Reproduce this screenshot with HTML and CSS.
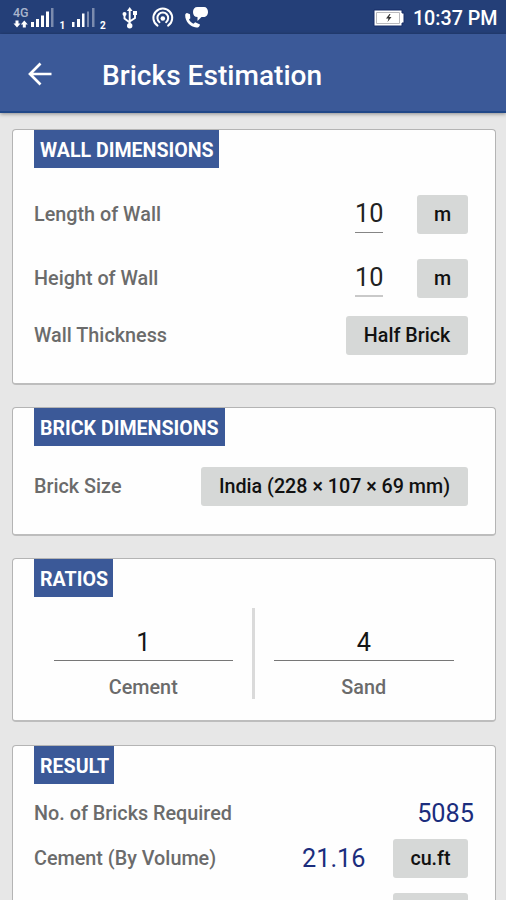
FILE: index.html
```html
<!DOCTYPE html>
<html lang="en">
<head>
<meta charset="utf-8">
<title>Bricks Estimation</title>
<link rel="stylesheet" href="styles.css">
</head>
<body>
<div class="screen">
  <header class="status">
    <svg class="status-icons" width="220" height="34" viewBox="0 0 220 34" aria-hidden="true">
      <text class="net" x="13" y="17">4G</text>
      <g fill="#fff">
        <path d="M15.500 20.500h3v3h2L17 27.500l-3.500-4h2zM22.800 27.500h3v-3h2l-3.500-4-3.500 4h2z"/>
        <path d="M31 22h3v5h-3zM36 19h3v8h-3zM41 15.500h3v11.500h-3zM46 11.500h3v15.500h-3z"/>
        <path d="M51 8h2.500v19H51z" opacity=".4"/>
        <path d="M72 22h2.500v5H72zM77 19h3v8h-3zM82 13.500h2.500v13.500H82z"/>
        <path d="M87 11.500h2v15.500h-2zM92 8h2.500v19H92z" opacity=".4"/>
      </g>
      <text class="sim" x="59.500" y="29">1</text>
      <text class="sim" x="100" y="29">2</text>
      <g fill="none" stroke="#fff" stroke-width="1.900">
        <path d="M129.700 10v15M124.500 14v4.500l5.200 4M135 12.500v5.500l-5.300 3.500"/>
      </g>
      <g fill="#fff"><path d="M129.700 7l2.800 4h-5.600z"/><circle cx="129.700" cy="25.800" r="2.700"/><circle cx="124.500" cy="14" r="2"/><path d="M133 11h4v4h-4z"/></g>
      <g fill="none" stroke="#fff" stroke-width="2" stroke-linecap="round">
        <path d="M157.500 25.700a9.400 9.400 0 1 1 10.600 0M159.500 22.200a5.400 5.400 0 1 1 6.600 0"/>
      </g>
      <circle cx="162.800" cy="18.500" r="2.300" fill="#fff"/>
      <path d="M187 13l3 1.200.3 4-1.300 1.200c1 2 2.500 3.500 4.500 4.300l1.700-1.400 4.800 2.100c-.3 2-1.600 3.300-3.700 3.100-6-.6-11.300-6-11.100-12.500.1-1 .7-1.700 1.800-2z" fill="#fff"/>
      <path d="M197.500 7h6.500c2.500 0 4 2 4 5s-2 5-4.500 5h-2l-4 4V17c-3 0-4.500-2-4.500-5s1.500-5 4.500-5z" fill="#fff"/>
    </svg>
    <div class="clock">
      <svg width="32" height="18" viewBox="0 0 32 18" aria-hidden="true">
        <path d="M1 1h28v3h2v10h-2v3H1z" fill="#fff" stroke="#172c66"/>
        <path d="M3.500 3.500h23v11h-23z" fill="none" stroke="#b9b9bd"/>
        <path d="M16.500 5l-3.500 4.500h2.500L14.500 13l4-5h-2.500L17.500 5z" fill="#333"/>
      </svg>
      <span>10:37 PM</span>
    </div>
  </header>
  <div class="toolbar">
    <svg width="24" height="24" viewBox="0 0 24 24" aria-hidden="true"><path d="M23.500 12H2.500M12.500 1.500L2 12l10.500 10.500" fill="none" stroke="#fff" stroke-width="2.700"/></svg>
    <h1>Bricks Estimation</h1>
  </div>
  <main>
    <section class="card wall">
      <h2 class="w-wall">WALL DIMENSIONS</h2>
      <div class="row first"><span class="label">Length of Wall</span><span class="field">10</span><button class="unit">m</button></div>
      <div class="row second"><span class="label">Height of Wall</span><span class="field soft">10</span><button class="unit">m</button></div>
      <div class="row third"><span class="label">Wall Thickness</span><button class="thickness">Half Brick</button></div>
    </section>
    <section class="card brick">
      <h2 class="w-brick">BRICK DIMENSIONS</h2>
      <div class="row"><span class="label">Brick Size</span><button class="size">India (228 × 107 × 69 mm)</button></div>
    </section>
    <section class="card ratios">
      <h2 class="w-ratios">RATIOS</h2>
      <div class="pair">
        <div class="part"><div class="entry">1</div><span class="label">Cement</span></div>
        <div class="rule"></div>
        <div class="part"><div class="entry">4</div><span class="label">Sand</span></div>
      </div>
    </section>
    <section class="card result">
      <h2 class="w-result">RESULT</h2>
      <div class="row total"><span class="label">No. of Bricks Required</span><span class="value">5085</span></div>
      <div class="row volume"><span class="label">Cement (By Volume)</span><span class="value">21.16</span><button class="cuft">cu.ft</button></div>
      <div class="row next"><button class="cuft"></button></div>
    </section>
  </main>
</div>
</body>
</html>
```
FILE: styles.css
```css
* { box-sizing: border-box; }
body { margin: 0; font-family: Roboto, "Liberation Sans", sans-serif; }
.screen { width: 506px; height: 900px; overflow: hidden; background: #e7e7e7; }
.status { height: 34px; background: #243f78; display: flex; justify-content: space-between; color: #fff; }
.net { font-size: 12.5px; font-weight: 500; fill: #a9b4cc; }
.sim { font-size: 10px; font-weight: 700; fill: #fff; }
.clock { display: flex; align-items: center; gap: 8px; padding: 3px 8.5px 0 0; font-size: 19.7px; font-weight: 500; white-space: nowrap; }
.clock svg { margin-top: -1px; }
.toolbar { height: 79px; background: #3b5998; border-bottom: 2px solid #214888; display: flex; align-items: center; padding: 2px 0 0 28px; gap: 50px; color: #fff; box-shadow: 0 1px 4px rgba(0, 0, 0, .4); }
h1 { margin: 0; padding-top: 4px; font-size: 28.1px; font-weight: 500; line-height: 34px; white-space: nowrap; }
main { padding: 16px 10px 0 12px; }
.card { width: 484px; background: #fefefe; border: 1px solid #b4b4b4; border-bottom: 2px solid #bdbdbd; border-radius: 4px; padding: 0 27px 0 21px; margin-bottom: 22px; }
.wall { height: 256px; }
.brick { height: 129px; }
.ratios { height: 164px; margin-bottom: 23px; }
.result { height: 240px; }
h2 { margin: 0; height: 38px; padding-left: 6px; background: #3b5998; color: #fff; font-size: 19.6px; line-height: 42px; font-weight: 700; white-space: nowrap; }
.w-wall { width: 185px; }
.w-brick { width: 191px; }
.w-ratios { width: 79px; }
.w-result { width: 80px; }
.row { display: flex; align-items: center; height: 40px; }
.label { color: #6b6b6b; font-size: 19.8px; font-weight: 500; line-height: 26px; white-space: nowrap; }
.row .label { flex: 1; padding-top: 1px; }
.first { margin-top: 26px; }
.second { margin-top: 24px; }
.third { margin-top: 17px; }
.brick .row { margin-top: 20px; }
button { height: 39px; border: 0; border-radius: 3px; background: #d6d8d7; padding: 1px 0 0; color: #111; font: 500 19.7px Roboto, "Liberation Sans", sans-serif; white-space: nowrap; }
.unit { width: 51px; }
.thickness { width: 122px; }
.size { width: 267px; }
.cuft { width: 75px; }
.field { width: 28px; height: 37px; border-bottom: 1px solid #858585; margin-right: 34px; text-align: center; font-size: 25.3px; line-height: 36px; color: #222; }
.soft { border-bottom: 2px solid #c9c9c9; }
.pair { display: flex; padding: 11px 14.5px 0 19.5px; }
.part { flex: 1; text-align: center; padding-top: 16px; }
.entry { height: 37px; border-bottom: 1px solid #777; margin-bottom: 14px; font-size: 25.3px; line-height: 37px; color: #151515; }
.rule { width: 3px; height: 91px; background: #dadada; margin: 0 19px; }
.value { color: #1b2d7d; font-size: 25.3px; line-height: 32px; padding-top: 1px; }
.total { margin-top: 9px; }
.total .value { margin-right: -6px; padding-top: 2px; }
.volume { margin-top: 5px; }
.volume .value { margin-right: 27.500px; }
.next { margin-top: 14px; justify-content: flex-end; }
```
